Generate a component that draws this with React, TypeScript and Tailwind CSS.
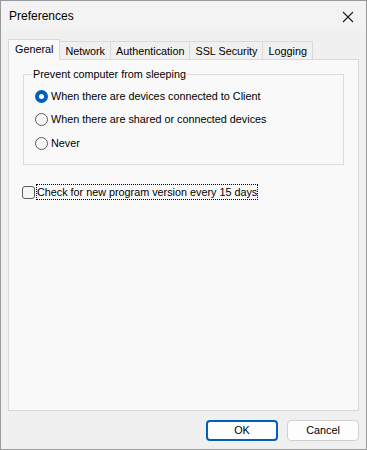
import React from 'react';

const tabs = ['General', 'Network', 'Authentication', 'SSL Security', 'Logging'];

const options = [
  'When there are devices connected to Client',
  'When there are shared or connected devices',
  'Never',
];

function Radio({ checked, label }: { checked?: boolean; label: string }) {
  return (
    <div className="flex items-center h-[16px]">
      {checked ? (
        <span className="w-[13px] h-[13px] rounded-full bg-[#005fb8] flex items-center justify-center">
          <span className="w-[5px] h-[5px] rounded-full bg-white" />
        </span>
      ) : (
        <span className="w-[13px] h-[13px] rounded-full border border-[#5c5c5c] bg-[#f6f6f6]" />
      )}
      <span className="ml-[3px]">{label}</span>
    </div>
  );
}

export default function App() {
  return (
    <div
      className="w-[367px] h-[450px] bg-[#f0f0f0] border border-[#9a9a9a] flex flex-col text-[10.8px] text-black"
      style={{ fontFamily: '"Liberation Sans", Arial, sans-serif' }}
    >
      {/* title bar */}
      <div className="h-[30px] bg-[#f3f3f3] flex items-center justify-between pl-[8px] pr-[12px] shrink-0">
        <span className="text-[12px]">Preferences</span>
        <svg width="12" height="12" viewBox="0 0 12 12" className="mt-[1px]">
          <path d="M1 1L11 11M11 1L1 11" stroke="#1a1a1a" strokeWidth="1.1" />
        </svg>
      </div>

      {/* tabs */}
      <div className="flex items-end pl-[7px] pt-[7px] h-[28px] shrink-0 text-[10.8px]">
        {tabs.map((t, i) =>
          i === 0 ? (
            <div
              key={t}
              className="h-[21px] px-[6px] bg-[#f9f9f9] border border-b-0 border-[#d9d9d9] flex items-center relative z-10 -mb-[1px] pb-[1px]"
            >
              {t}
            </div>
          ) : (
            <div
              key={t}
              className="h-[18px] px-[5px] bg-[#f0f0f0] border border-b-0 border-l-0 border-[#d9d9d9] flex items-center pt-[1px]"
            >
              {t}
            </div>
          )
        )}
      </div>

      {/* panel */}
      <div className="mx-[7px] h-[352px] bg-[#f9f9f9] border border-[#d9d9d9] pt-[8px] px-[14px]">
        <fieldset className="border border-[#dcdcdc] h-[98px] px-[11px] pt-[0px] -mt-[1px]">
          <legend className="px-[1px] -ml-[3px] leading-[14px]">Prevent computer from sleeping</legend>
          <div className="flex flex-col gap-[7.5px] mt-[7px]">
            {options.map((o, i) => (
              <Radio key={o} checked={i === 0} label={o} />
            ))}
          </div>
        </fieldset>

        <div className="flex items-center mt-[20px] -ml-[1px]">
          <span className="w-[13px] h-[13px] rounded-[3px] border border-[#5c5c5c] bg-[#f6f6f6]" />
          <span className="ml-[2px] outline outline-1 outline-dotted outline-black px-[0px] leading-[14px]">
            Check for new program version every 15 days
          </span>
        </div>
      </div>

      {/* buttons */}
      <div className="flex justify-end gap-[9px] pr-[7px] mt-[9px]">
        <button className="w-[72px] h-[21px] rounded-[4px] border-2 border-[#005fb8] bg-[#fdfdfd] flex items-center justify-center">
          OK
        </button>
        <button className="w-[72px] h-[21px] rounded-[4px] border border-[#d0d0d0] bg-[#fdfdfd] flex items-center justify-center">
          Cancel
        </button>
      </div>
    </div>
  );
}
